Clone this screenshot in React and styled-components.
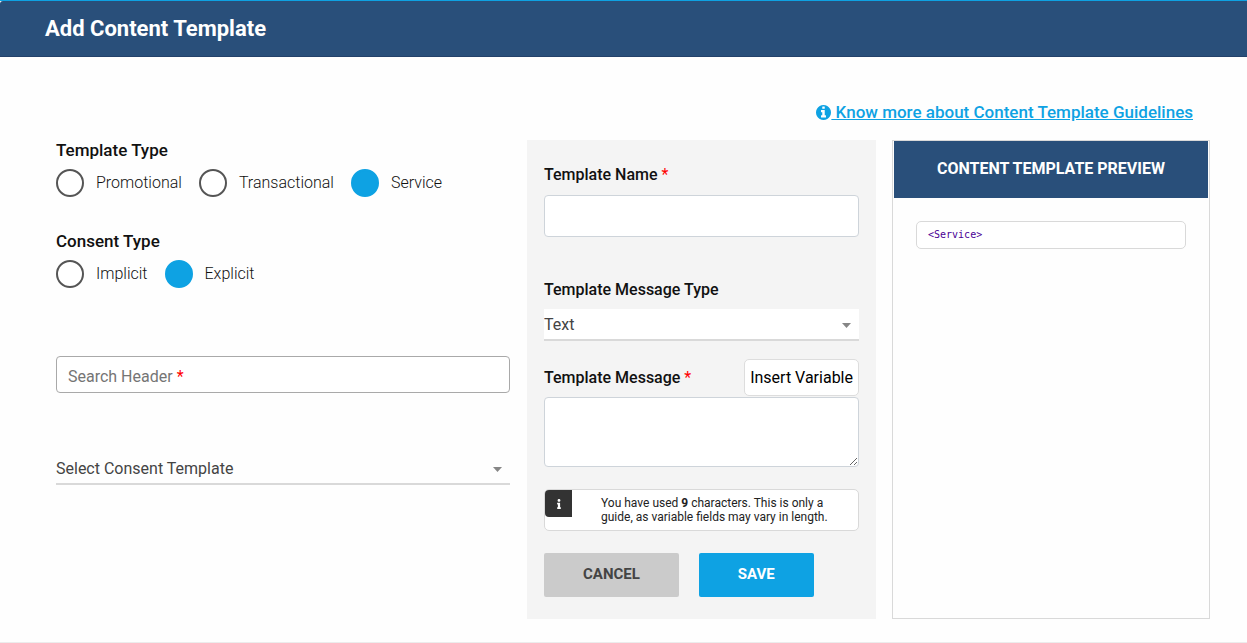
import { useState } from 'react'
import styled, { createGlobalStyle, css } from 'styled-components'
import { FaInfo } from 'react-icons/fa'

const GlobalStyle = createGlobalStyle`
    * {
        box-sizing : border-box;
    }
    body {
        margin : 0;
        background : #fefefe;
        color : #111;
        font-family : Roboto, sans-serif;
        font-size : 16px;
        line-height : 20px;
    }
    button, input, select, textarea {
        margin : 0;
        font : inherit;
        color : inherit;
    }
`

const Page = styled.main`
    border-top : 1px solid #0ea2e3;
    border-bottom : 1px solid #ececec;
`
const Header = styled.header`
    padding : 13px 45px 12px;
    background : #294f7a;
    border-bottom : 1px solid #23416a;
    border-top-left-radius : 3px;
`
const Title = styled.h1`
    margin : 0;
    font-size : 22px;
    line-height : 30px;
    font-weight : 700;
    color : #fff;
`
const Body = styled.div`
    padding : 43px 37px 23px 56px;
`
const GuideLine = styled.div`
    display : flex;
    justify-content : flex-end;
    padding-right : 17px;
    margin-bottom : 16px;
`
const GuideLink = styled.a`
    display : flex;
    align-items : center;
    font-size : 17px;
    line-height : 24px;
    font-weight : 500;
    color : #0ea2e3;
    white-space : pre;
    text-decoration : none;

    svg {
        width : 15px;
        height : 15px;
        fill : currentColor;
    }
    span {
        text-decoration : underline;
    }
`
const Columns = styled.form`
    display : grid;
    grid-template-columns : minmax(0, 455fr) minmax(0, 349fr) minmax(0, 318fr);
    gap : 16px;
`
const Column = styled.div`
    display : flex;
    flex-direction : column;
`
const Choices = styled(Column)`
    padding-right : 1px;
`
const boldLabel = css`
    font-weight : 500;
    line-height : 20px;
`
const Star = styled.span`
    color : #f00;
    font-weight : 400;
`

const RadioGroup = styled.fieldset`
    display : flex;
    flex-wrap : wrap;
    gap : 8px 17px;
    margin : 0 0 34px;
    padding : 0;
    border : 0;
`
const Legend = styled.legend`
    ${boldLabel}
    padding : 0;
    margin-bottom : 9px;
    font-size : 17px;
`
const RadioLabel = styled.label`
    display : flex;
    align-items : center;
    gap : 12px;
    line-height : 28px;
    font-weight : 300;
`
const Radio = styled.input`
    appearance : none;
    width : 28px;
    height : 28px;
    border : 2px solid #555;
    border-radius : 50%;
    background : #fff;

    &:checked {
        border-color : #0ea2e3;
        background : #0ea2e3;
    }
`

const SearchBox = styled.div`
    position : relative;
    margin : 34px 0 60px;
`
const SearchInput = styled.input`
    display : block;
    width : 100%;
    height : 37px;
    padding : 0 12px;
    border : 1px solid #a9a9a9;
    border-radius : 4px;
    background : #fff;
`
const SearchLabel = styled.label`
    position : absolute;
    left : 12px;
    top : 11px;
    color : #757575;
    pointer-events : none;
`

const SelectBox = styled.div`
    position : relative;
    color : #444;
    background : ${props => props.$filled ? '#fff' : 'transparent'};
`
const Select = styled.select`
    appearance : none;
    display : block;
    width : 100%;
    height : 32px;
    padding : 2px 24px 0 0;
    border : 0;
    border-bottom : 2px solid #d9d9d9;
    border-radius : 0;
    background : transparent;
`
const Caret = styled.svg`
    position : absolute;
    right : 8px;
    top : 14px;
    width : 9px;
    height : 5px;
    fill : #868686;
    pointer-events : none;
`

const Panel = styled(Column)`
    padding : 25px 17px 22px;
    background : #f4f4f4;
`
const FieldLabel = styled.label`
    ${boldLabel}
`
const NameInput = styled.input`
    height : 42px;
    margin : 10px 0 43px;
    padding : 0 12px;
    border : 1px solid #ced4da;
    border-radius : 4px;
    background : #fff;
`
const TypeField = styled.div`
    display : flex;
    flex-direction : column;
    gap : 9px;
    margin-bottom : 18px;
`
const MessageBar = styled.div`
    display : flex;
    justify-content : space-between;
    align-items : center;
    margin-bottom : 1px;
`
const InsertButton = styled.button`
    height : 37px;
    padding : 0 5px;
    border : 1px solid #ddd;
    border-radius : 5px;
    background : #fff;
    color : #000;
`
const Message = styled.textarea`
    display : block;
    height : 70px;
    padding : 6px 12px;
    border : 1px solid #ced4da;
    border-radius : 4px;
    background : #fff;
    resize : vertical;
`
const Note = styled.div`
    display : flex;
    align-items : flex-start;
    gap : 29px;
    margin : 22px 0;
    border : 1px solid #d9d9d9;
    border-radius : 5px;
    background : #fff;
`
const NoteIcon = styled.div`
    display : flex;
    flex : none;
    justify-content : center;
    align-items : center;
    width : 27px;
    height : 27px;
    border-radius : 4px 0 0 4px;
    background : #333;
    color : #fff;
`
const NoteText = styled.p`
    margin : 0;
    padding : 6px 12px 6px 0;
    font-size : 12px;
    line-height : 14px;
    color : #222;
`
const Actions = styled.div`
    display : flex;
    gap : 20px;
`
const ActionButton = styled.button`
    height : 44px;
    padding : 0 39px 2px;
    border : 0;
    border-radius : 2px;
    font-size : 15px;
    font-weight : 700;
    text-transform : uppercase;
    background : ${props => props.$primary ? '#0ea2e3' : '#cbcbcb'};
    color : ${props => props.$primary ? '#fff' : '#444'};
`

const Preview = styled.section`
    padding : 0 1px;
    border : 1px solid #d9d9d9;
    background : #fefefe;
`
const PreviewTitle = styled.h2`
    margin : 0;
    padding : 18px 8px 19px;
    font-size : 16px;
    line-height : 20px;
    font-weight : 700;
    text-align : center;
    text-transform : uppercase;
    background : #294f7a;
    color : #fff;
`
const PreviewMessage = styled.pre`
    margin : 23px 22px;
    padding : 6px 11px;
    border : 1px solid #d9d9d9;
    border-radius : 5px;
    background : #fff;
    font-family : "DejaVu Sans Mono", monospace;
    font-size : 10px;
    line-height : 14px;
    color : #4b0095;
`

function InfoCircle() {
    return (
        <svg viewBox="0 128 1536 1536" aria-hidden="true">
            <path d="M1024 1376v-160q0-14-9-23t-23-9h-96v-512q0-14-9-23t-23-9h-320q-14 0-23 9t-9 23v160q0 14 9 23t23 9h96v320h-96q-14 0-23 9t-9 23v160q0 14 9 23t23 9h448q14 0 23-9t9-23zm-128-896v-160q0-14-9-23t-23-9h-192q-14 0-23 9t-9 23v160q0 14 9 23t23 9h192q14 0 23-9t9-23zm640 416q0 209-103 385.500t-279.500 279.500-385.500 103-385.500-103-279.500-279.500-103-385.500 103-385.500 279.500-279.500 385.500-103 385.500 103 279.500 279.500 103 385.500z" />
        </svg>
    )
}

function RadioSet({ title, name, options, value, onChange }) {
    return (
        <RadioGroup>
            <Legend>{title}</Legend>
            {options.map(option => (
                <RadioLabel key={option}>
                    <Radio
                        type="radio"
                        name={name}
                        value={option}
                        checked={value === option}
                        onChange={() => onChange(option)}
                    />
                    {option}
                </RadioLabel>
            ))}
        </RadioGroup>
    )
}

function Dropdown({ filled, children, ...rest }) {
    return (
        <SelectBox $filled={filled}>
            <Select {...rest}>{children}</Select>
            <Caret viewBox="0 0 9 5" aria-hidden="true">
                <path d="M0 0h9L4.5 5z" />
            </Caret>
        </SelectBox>
    )
}

export default function App() {
    const [type, setType] = useState('Service')
    const [consent, setConsent] = useState('Explicit')
    const [search, setSearch] = useState('')
    const [message, setMessage] = useState('')

    return (
        <Page>
            <GlobalStyle />
            <Header>
                <Title>Add Content Template</Title>
            </Header>

            <Body>
                <GuideLine>
                    <GuideLink href="#guidelines">
                        <InfoCircle />
                        <span> Know more about Content Template Guidelines</span>
                    </GuideLink>
                </GuideLine>

                <Columns onSubmit={e => e.preventDefault()}>
                    <Choices>
                        <RadioSet
                            title="Template Type"
                            name="templateType"
                            options={['Promotional', 'Transactional', 'Service']}
                            value={type}
                            onChange={setType}
                        />
                        <RadioSet
                            title="Consent Type"
                            name="consentType"
                            options={['Implicit', 'Explicit']}
                            value={consent}
                            onChange={setConsent}
                        />
                        <SearchBox>
                            <SearchInput id="search" value={search} onChange={e => setSearch(e.target.value)} />
                            <SearchLabel htmlFor="search" hidden={search !== ''}>
                                Search Header <Star>*</Star>
                            </SearchLabel>
                        </SearchBox>
                        <Dropdown aria-label="Consent template">
                            <option>Select Consent Template</option>
                        </Dropdown>
                    </Choices>

                    <Panel>
                        <FieldLabel htmlFor="name">Template Name <Star>*</Star></FieldLabel>
                        <NameInput id="name" />

                        <TypeField>
                            <FieldLabel htmlFor="messageType">Template Message Type</FieldLabel>
                            <Dropdown id="messageType" filled>
                                <option>Text</option>
                            </Dropdown>
                        </TypeField>

                        <MessageBar>
                            <FieldLabel htmlFor="message">Template Message <Star>*</Star></FieldLabel>
                            <InsertButton type="button" onClick={() => setMessage(message + '{#var#}')}>
                                Insert Variable
                            </InsertButton>
                        </MessageBar>
                        <Message id="message" value={message} onChange={e => setMessage(e.target.value)} />

                        <Note>
                            <NoteIcon><FaInfo size={10} /></NoteIcon>
                            <NoteText>
                                You have used <b>{type.length + 2 + message.length}</b> characters. This is only a
                                guide, as variable fields may vary in length.
                            </NoteText>
                        </Note>

                        <Actions>
                            <ActionButton type="button">Cancel</ActionButton>
                            <ActionButton type="submit" $primary>Save</ActionButton>
                        </Actions>
                    </Panel>

                    <Preview>
                        <PreviewTitle>Content Template Preview</PreviewTitle>
                        <PreviewMessage>{`<${type}>${message}`}</PreviewMessage>
                    </Preview>
                </Columns>
            </Body>
        </Page>
    )
}
